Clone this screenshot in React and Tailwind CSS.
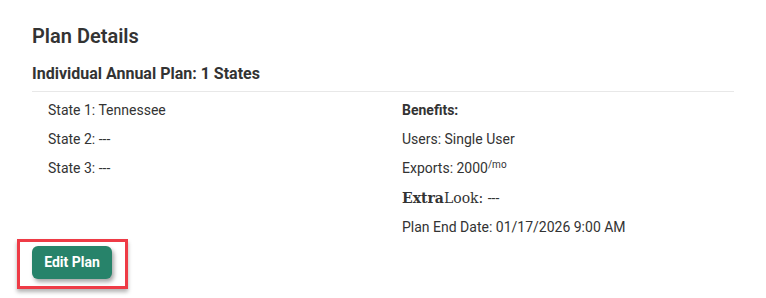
import React from "react";

const leftRows = ["State 1: Tennessee", "State 2: ---", "State 3: ---"];

const App = () => {
  return (
    <div
      className="h-[298px] w-[766px] overflow-hidden bg-white px-8 pt-[22px] text-[#333]"
      style={{ fontFamily: "Roboto, 'Liberation Sans', sans-serif" }}
    >
      <h2 className="text-[20px] font-semibold leading-[28px]">Plan Details</h2>
      <h3 className="mt-[12px] border-b border-[#e8e8e8] pb-[5px] text-[16px] font-bold leading-[24px]">
        Individual Annual Plan: 1 States
      </h3>

      <div className="grid grid-cols-[354px_1fr] pt-[4px] text-[14px] leading-[29px]">
        <div className="pl-4">
          {leftRows.map((row) => (
            <div key={row}>{row}</div>
          ))}
        </div>
        <div className="pl-4">
          <div className="font-bold">Benefits:</div>
          <div>Users: Single User</div>
          <div>
            Exports: 2000<sup className="text-[10px]">/mo</sup>
          </div>
          <div
            className="leading-[30px]"
            style={{ fontFamily: "'DejaVu Serif', 'Liberation Serif', serif" }}
          >
            <span className="font-bold">Extra</span>Look:{" "}
            <span style={{ fontFamily: "Roboto, sans-serif" }}>---</span>
          </div>
          <div>Plan End Date: 01/17/2026 9:00 AM</div>
        </div>
      </div>

      <div className="relative mt-[4px] inline-block">
        <span className="pointer-events-none absolute -bottom-[10px] -left-[15px] -right-[16px] -top-[7px] border-[3px] border-[#ee3b46] shadow-[0_3px_4px_rgba(0,0,0,0.3)]" />
        <button
          type="button"
          className="h-[33px] w-[80px] rounded-[6px] bg-[#27836a] text-[14px] font-bold text-white shadow-[2px_3px_4px_rgba(0,0,0,0.35)]"
        >
          Edit Plan
        </button>
      </div>
    </div>
  );
};

export default App;
